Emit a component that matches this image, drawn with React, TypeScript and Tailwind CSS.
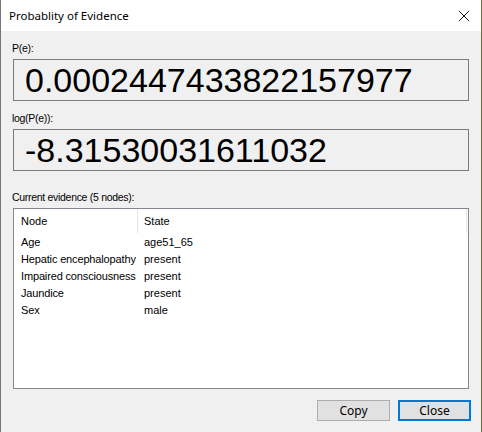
import React from "react";

const rows = [
  ["Age", "age51_65"],
  ["Hepatic encephalopathy", "present"],
  ["Impaired consciousness", "present"],
  ["Jaundice", "present"],
  ["Sex", "male"],
];

function ValueBox({ value }: { value: string }) {
  return (
    <div className="mx-[12px] h-[42px] border border-[#7a7a7a] bg-[#f0f0f0] flex items-center pl-[11px]">
      <span className="text-[34px] leading-none text-black" style={{ fontFamily: '"Liberation Sans", Arial, sans-serif' }}>
        {value}
      </span>
    </div>
  );
}

export default function App() {
  const ui = { fontFamily: '"Noto Sans", "Open Sans", sans-serif' };
  const ms = { fontFamily: '"Liberation Sans", Arial, sans-serif' };
  return (
    <div className="w-[482px] h-[432px] bg-[#6f6d3c] flex">
      <div className="w-[481px] h-[432px] border-l border-[#777] bg-[#f0f0f0] flex flex-col">
        {/* title bar */}
        <div className="h-[31px] bg-white flex items-center justify-between pl-[8px] pr-[10px]" style={ui}>
          <span className="text-[11.5px] text-black">Probablity of Evidence</span>
          <svg width="12" height="12" viewBox="0 0 12 12" className="mr-[1px]">
            <path d="M1 1 L11 11 M11 1 L1 11" stroke="#111" strokeWidth="1" />
          </svg>
        </div>

        <div className="flex flex-col" style={ms}>
          <div className="pl-[11px] pt-[12px] h-[28px] text-[10.5px] tracking-[-0.3px] text-black leading-none">P(e):</div>
          <ValueBox value="0.0002447433822157977" />
          <div className="pl-[11px] pt-[12px] h-[28px] text-[10.5px] tracking-[-0.3px] text-black leading-none">log(P(e)):</div>
          <ValueBox value="-8.31530031611032" />
          <div className="pl-[11px] pt-[21px] h-[37px] text-[10.5px] tracking-[-0.3px] text-black leading-none">Current evidence (5 nodes):</div>

          <div className="mx-[12px] h-[181px] border border-[#828790] bg-white flex flex-col">
            <div className="h-[24px] flex items-center text-[11px] text-black">
              <div className="w-[124px] pl-[7px] h-full flex items-center border-r border-[#e5e5e5]">Node</div>
              <div className="flex-1 pl-[6px] h-full flex items-center border-r border-[#e5e5e5] mr-[1px]">State</div>
            </div>
            <div className="flex flex-col pt-[1px]">
              {rows.map(([n, s]) => (
                <div key={n} className="h-[17px] flex items-center text-[11px] text-black leading-none">
                  <div className="w-[124px] pl-[7px] whitespace-nowrap tracking-[-0.15px]">{n}</div>
                  <div className="pl-[6px]">{s}</div>
                </div>
              ))}
            </div>
          </div>

          <div className="flex justify-end gap-[8px] pr-[10px] pt-[11px]" style={ui}>
            <button className="w-[73px] h-[21px] bg-[#e1e1e1] border border-[#adadad] text-[12px] text-black leading-none">
              Copy
            </button>
            <button className="w-[73px] h-[21px] bg-[#e1e1e1] border-2 border-[#0078d7] text-[12px] text-black leading-none">
              Close
            </button>
          </div>
        </div>
      </div>
    </div>
  );
}
